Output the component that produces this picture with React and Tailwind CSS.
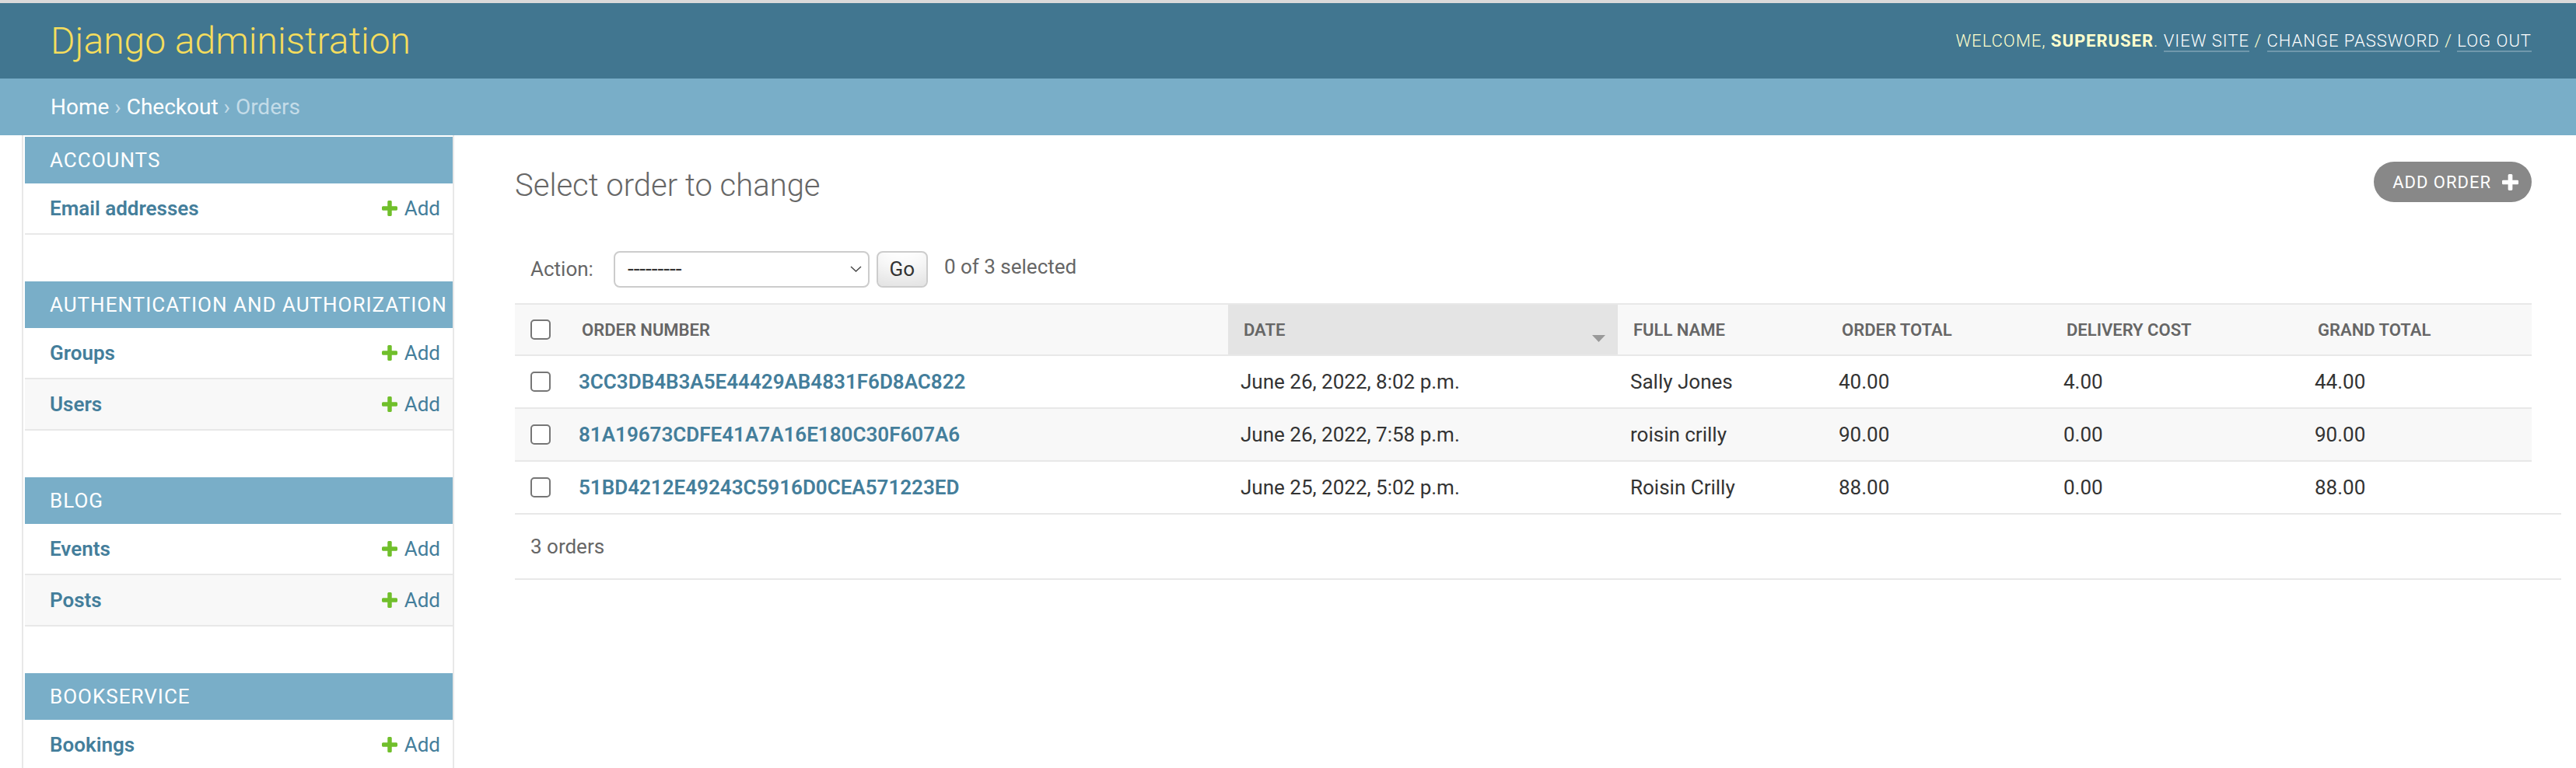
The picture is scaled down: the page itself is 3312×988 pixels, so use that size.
import { useState } from 'react';

const sections = [
  { name: 'Accounts', models: ['Email addresses'] },
  { name: 'Authentication and Authorization', models: ['Groups', 'Users'] },
  { name: 'Blog', models: ['Events', 'Posts'] },
  { name: 'Bookservice', models: ['Bookings'] },
];

const orders = [
  { number: '3CC3DB4B3A5E44429AB4831F6D8AC822', date: 'June 26, 2022, 8:02 p.m.', name: 'Sally Jones', total: '40.00', delivery: '4.00', grand: '44.00' },
  { number: '81A19673CDFE41A7A16E180C30F607A6', date: 'June 26, 2022, 7:58 p.m.', name: 'roisin crilly', total: '90.00', delivery: '0.00', grand: '90.00' },
  { number: '51BD4212E49243C5916D0CEA571223ED', date: 'June 25, 2022, 5:02 p.m.', name: 'Roisin Crilly', total: '88.00', delivery: '0.00', grand: '88.00' },
];

const cols = 'grid grid-cols-[66px_851px_501px_268px_289px_323px_295px]';

function PlusIcon({ className }) {
  return (
    <svg viewBox="192 128 1408 1408" className={className} fill="currentColor">
      <path d="M1600 736v192q0 40-28 68t-68 28h-416v416q0 40-28 68t-68 28h-192q-40 0-68-28t-28-68v-416h-416q-40 0-68-28t-28-68v-192q0-40 28-68t68-28h416v-416q0-40 28-68t68-28h192q40 0 68 28t28 68v416h416q40 0 68 28t28 68z" />
    </svg>
  );
}

function Checkbox({ checked, onChange }) {
  return (
    <button
      onClick={onChange}
      className={`h-[26px] w-[26px] rounded-[5px] border-2 border-[#767676] ${checked ? 'bg-[#447e9b]' : 'bg-white'}`}
    />
  );
}

function Sidebar() {
  return (
    <aside className="w-[554px] shrink-0 border-r-2 border-[#e8e8e8] pl-[2px] pt-[2px]">
      {sections.map((section) => (
        <div key={section.name} className="mb-[60px]">
          <div className="flex h-[60px] items-center bg-[#79aec8] pl-[32px] text-[26px] uppercase tracking-[1px] text-white">
            {section.name}
          </div>
          {section.models.map((model, i) => (
            <div
              key={model}
              className={`flex h-[66px] items-center justify-between border-b-2 border-[#e8e8e8] pl-[32px] pr-[16px] text-[26px] ${i % 2 ? 'bg-[#f8f8f8]' : 'bg-white'}`}
            >
              <a className="font-semibold text-[#447e9b]">{model}</a>
              <a className="flex items-center text-[#447e9b]">
                <PlusIcon className="mr-[9px] h-[20px] w-[20px] text-[#70bf2b]" />
                Add
              </a>
            </div>
          ))}
        </div>
      ))}
    </aside>
  );
}

export default function App() {
  const [selected, setSelected] = useState([]);

  const toggle = (id) => {
    setSelected(selected.includes(id) ? selected.filter((s) => s !== id) : [...selected, id]);
  };

  return (
    <div className="flex h-[988px] flex-col overflow-hidden bg-white font-[Roboto,'Liberation_Sans',sans-serif] text-[#333]">
      <div className="h-[4px] shrink-0 bg-[#dadada]" />

      {/* Header */}
      <header className="flex h-[97px] shrink-0 items-center justify-between bg-[#417690] pl-[65px] pr-[57px]">
        <h1 className="text-[48px] font-light leading-none text-[#f5dd5d]">Django administration</h1>
        <div className="text-[22px] font-light uppercase tracking-[1px] text-[#ffffcc]">
          Welcome, <strong className="font-bold">superuser</strong>.{' '}
          <a className="border-b-2 border-white/25 text-white">View site</a> /{' '}
          <a className="border-b-2 border-white/25 text-white">Change password</a> /{' '}
          <a className="border-b-2 border-white/25 text-white">Log out</a>
        </div>
      </header>

      {/* Breadcrumbs */}
      <div className="flex h-[73px] shrink-0 items-center bg-[#79aec8] pl-[65px] text-[28px] text-[#c4dce8]">
        <a className="text-white">Home</a>
        <span className="whitespace-pre"> › </span>
        <a className="text-white">Checkout</a>
        <span className="whitespace-pre"> › Orders</span>
      </div>

      <div className="flex min-h-0 flex-1">
        <div className="w-[30px] shrink-0 border-r-2 border-[#e8e8e8]" />
        <Sidebar />

        <main className="min-w-0 flex-1 pl-[78px] pr-[57px] pt-[41px]">
          <div className="flex items-start justify-between">
            <h1 className="text-[40px] font-light leading-[47px] text-[#666]">Select order to change</h1>
            <a className="-mt-[7px] flex h-[52px] items-center rounded-full bg-[#888] pl-[24px] pr-[17px] text-[22px] uppercase tracking-[1px] text-white">
              Add order
              <PlusIcon className="ml-[14px] h-[21px] w-[21px]" />
            </a>
          </div>

          {/* Actions */}
          <div className="mt-[40px] flex h-[88px] items-center px-[20px] text-[26px] text-[#666]">
            <span>Action:</span>
            <div className="ml-[26px] flex h-[47px] w-[329px] items-center justify-between rounded-[8px] border-2 border-[#cccccc] bg-white pl-[16px] pr-[8px] text-[28px] text-[#333]">
              <span>---------</span>
              <svg width="15" height="8" viewBox="0 0 15 8" fill="none" stroke="#444" strokeWidth="1.4">
                <path d="M1 1l6.5 6 6.5-6" />
              </svg>
            </div>
            <button className="ml-[9px] h-[47px] w-[66px] rounded-[8px] border-2 border-[#cccccc] bg-white text-[26px] text-[#333] shadow-[inset_0_-30px_40px_-20px_rgba(0,0,0,0.15)]">
              Go
            </button>
            <span className="ml-[21px] pb-[6px]">{selected.length} of 3 selected</span>
          </div>

          {/* Results */}
          <div className={`${cols} h-[68px] border-y-2 border-[#e8e8e8] bg-[#f8f8f8] text-[22px] font-semibold uppercase text-[#666]`}>
            <div className="flex items-center justify-center">
              <Checkbox
                checked={selected.length === orders.length}
                onChange={() => setSelected(selected.length === orders.length ? [] : orders.map((o) => o.number))}
              />
            </div>
            <div className="flex items-center pl-[20px]">Order number</div>
            <div className="flex items-center justify-between bg-[#e4e4e4] pl-[20px] pr-[16px]">
              <span>Date</span>
              <svg width="17" height="9" viewBox="0 0 17 9" className="mt-[22px]">
                <polygon points="0,0 17,0 8.5,9" fill="#999" />
              </svg>
            </div>
            <div className="flex items-center pl-[20px]">Full name</div>
            <div className="flex items-center pl-[20px]">Order total</div>
            <div className="flex items-center pl-[20px]">Delivery cost</div>
            <div className="flex items-center pl-[20px]">Grand total</div>
          </div>

          {orders.map((order, i) => (
            <div
              key={order.number}
              className={`${cols} ${i < orders.length - 1 ? 'h-[68px] border-b-2 border-[#e8e8e8]' : 'h-[66px]'} text-[26px] ${i % 2 ? 'bg-[#f8f8f8]' : 'bg-white'}`}
            >
              <div className="flex items-center justify-center">
                <Checkbox checked={selected.includes(order.number)} onChange={() => toggle(order.number)} />
              </div>
              <div className="flex items-center pl-[16px]">
                <a className="font-semibold text-[#447e9b]">{order.number}</a>
              </div>
              <div className="flex items-center pl-[16px]">{order.date}</div>
              <div className="flex items-center pl-[16px]">{order.name}</div>
              <div className="flex items-center pl-[16px]">{order.total}</div>
              <div className="flex items-center pl-[16px]">{order.delivery}</div>
              <div className="flex items-center pl-[16px]">{order.grand}</div>
            </div>
          ))}

          <div className="-mr-[38px] flex h-[86px] items-center border-y-2 border-[#e8e8e8] pl-[20px] text-[26px] text-[#666]">
            3 orders
          </div>
        </main>
      </div>
    </div>
  );
}
